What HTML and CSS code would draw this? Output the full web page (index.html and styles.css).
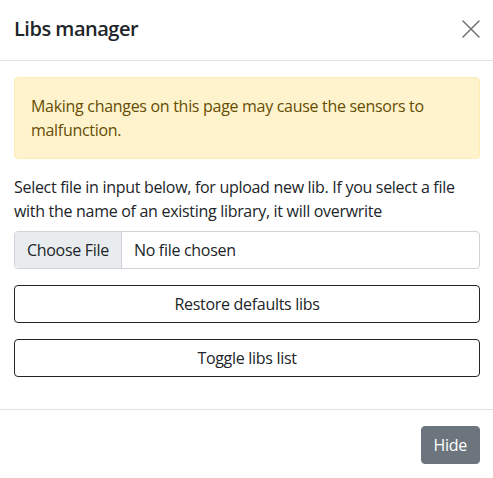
FILE: index.html
```html
<!DOCTYPE html>
<html lang="en">
<head>
<meta charset="utf-8">
<title>Libs manager</title>
<link rel="stylesheet" href="styles.css">
</head>
<body>
<div class="modal-content">
  <div class="modal-header">
    <h5 class="modal-title">Libs manager</h5>
    <button class="btn-close" type="button" aria-label="Close">
      <svg viewBox="0 0 18 18" width="18" height="18" aria-hidden="true">
        <path d="M1 1L17 17M17 1L1 17" stroke="currentColor" stroke-width="1.5" stroke-linecap="round" fill="none"/>
      </svg>
    </button>
  </div>
  <div class="modal-body">
    <div class="alert">Making changes on this page may cause the sensors to malfunction.</div>
    <p class="hint">Select file in input below, for upload new lib. If you select a file with the name of an existing library, it will overwrite</p>
    <div class="file-input">
      <span class="file-btn">Choose File</span>
      <span class="file-name">No file chosen</span>
    </div>
    <button class="btn-outline" type="button">Restore defaults libs</button>
    <button class="btn-outline" type="button">Toggle libs list</button>
  </div>
  <div class="modal-footer">
    <button class="btn-secondary" type="button">Hide</button>
  </div>
</div>
</body>
</html>
```

FILE: styles.css
```css
* {
  box-sizing: border-box;
}

body {
  margin: 0;
  background: #ffffff;
  font-family: "Open Sans", "Noto Sans", sans-serif;
  font-size: 16px;
  line-height: 24px;
  color: #212529;
  letter-spacing: -0.3px;
}

.modal-content {
  width: 500px;
  margin: -3px 0 0 -3px;
  border: 1px solid rgba(0, 0, 0, 0.2);
  background: #ffffff;
}

.modal-header {
  display: flex;
  align-items: center;
  justify-content: space-between;
  padding: 16px;
  border-bottom: 1px solid #dee2e6;
}

.modal-title {
  margin: 0;
  font-size: 20px;
  line-height: 30px;
  font-weight: 600;
  letter-spacing: -0.5px;
}

.btn-close {
  display: flex;
  align-items: center;
  justify-content: center;
  width: 26px;
  height: 26px;
  padding: 0;
  margin-right: -4px;
  border: 0;
  background: transparent;
  color: #707070;
}

.modal-body {
  padding: 16px;
}

.alert {
  padding: 16px;
  margin-bottom: 16px;
  border: 1px solid #ffecb5;
  border-radius: 4px;
  background: #fff3cd;
  color: #664d03;
}

.hint {
  margin: 0 0 8px;
}

.file-input {
  display: flex;
  height: 38px;
  margin-bottom: 16px;
  border: 1px solid #ced4da;
  border-radius: 4px;
  overflow: hidden;
  align-items: stretch;
}

.file-btn {
  display: flex;
  align-items: center;
  padding: 0 12px;
  background: #e9ecef;
  border-right: 1px solid #ced4da;
}

.file-name {
  display: flex;
  align-items: center;
  padding: 0 12px;
}

.btn-outline {
  display: block;
  width: 100%;
  height: 38px;
  margin: 0 0 16px;
  padding: 0 12px;
  border: 1px solid #212529;
  border-radius: 4px;
  background: #ffffff;
  color: #212529;
  font: inherit;
  letter-spacing: inherit;
  text-align: center;
}

.modal-footer {
  display: flex;
  justify-content: flex-end;
  padding: 12px;
  border-top: 1px solid #dee2e6;
}

.btn-secondary {
  height: 38px;
  margin: 4px;
  padding: 0 12px;
  border: 1px solid #6c757d;
  border-radius: 4px;
  background: #6c757d;
  color: #ffffff;
  font: inherit;
  letter-spacing: inherit;
}
```
